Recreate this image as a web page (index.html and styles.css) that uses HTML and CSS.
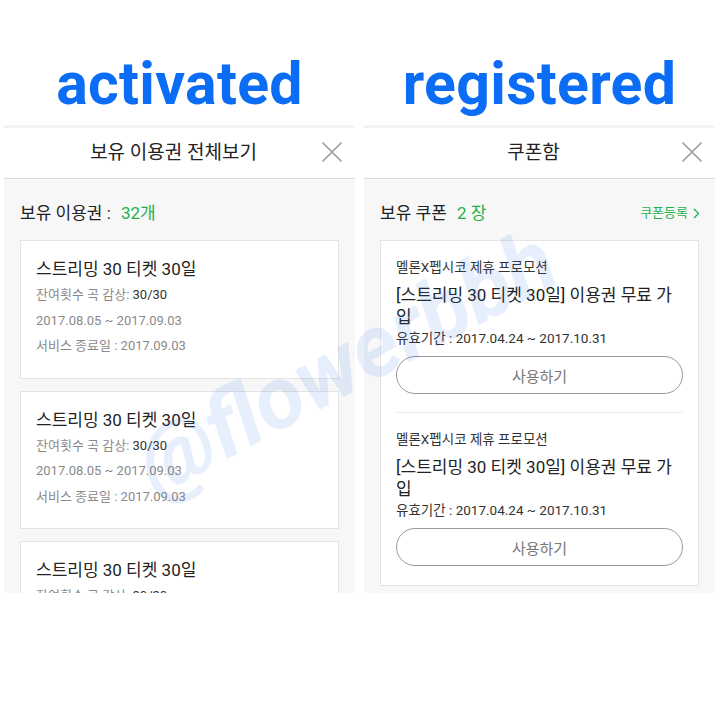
FILE: index.html
```html
<!DOCTYPE html>
<html lang="ko">
<head>
  <meta charset="UTF-8">
  <meta name="viewport" content="width=device-width, initial-scale=1.0">
  <title>activated / registered</title>
  <link rel="stylesheet" href="styles.css">
</head>
<body>
  <div class="board">
    <!-- 이용권 -->
    <section class="col">
      <h1 class="big-title">activated</h1>
      <div class="panel">
        <header class="panel-head">
          <span></span>
          <h2>보유 이용권 전체보기</h2>
          <svg class="close" width="22" height="22" viewBox="0 0 22 22"><path d="M1.5 1.5 L20.5 20.5 M20.5 1.5 L1.5 20.5" stroke="#9a9a9a" stroke-width="1.6" fill="none"/></svg>
        </header>
        <div class="panel-body">
          <div class="summary"><span>보유 이용권 : <em>32개</em></span></div>

          <div class="ticket">
            <h3>스트리밍 30 티켓 30일</h3>
            <p>잔여횟수 곡 감상: <b>30/30</b></p>
            <p>2017.08.05 ~ 2017.09.03</p>
            <p>서비스 종료일 : 2017.09.03</p>
          </div>
          <div class="ticket">
            <h3>스트리밍 30 티켓 30일</h3>
            <p>잔여횟수 곡 감상: <b>30/30</b></p>
            <p>2017.08.05 ~ 2017.09.03</p>
            <p>서비스 종료일 : 2017.09.03</p>
          </div>
          <div class="ticket">
            <h3>스트리밍 30 티켓 30일</h3>
            <p>잔여횟수 곡 감상: <b>30/30</b></p>
            <p>2017.08.05 ~ 2017.09.03</p>
            <p>서비스 종료일 : 2017.09.03</p>
          </div>
        </div>
      </div>
    </section>

    <!-- 쿠폰 -->
    <section class="col">
      <h1 class="big-title">registered</h1>
      <div class="panel">
        <header class="panel-head">
          <span></span>
          <h2>쿠폰함</h2>
          <svg class="close" width="22" height="22" viewBox="0 0 22 22"><path d="M1.5 1.5 L20.5 20.5 M20.5 1.5 L1.5 20.5" stroke="#9a9a9a" stroke-width="1.6" fill="none"/></svg>
        </header>
        <div class="panel-body">
          <div class="summary">
            <span>보유 쿠폰 <em>2 장</em></span>
            <a href="#" class="reg-link">쿠폰등록
              <svg width="7" height="11" viewBox="0 0 7 11"><path d="M1 1 L5.5 5.5 L1 10" stroke="#1fb24a" stroke-width="1.3" fill="none"/></svg>
            </a>
          </div>

          <div class="coupon-box">
            <div class="coupon">
              <p class="promo">멜론X펩시코 제휴 프로모션</p>
              <h3>[스트리밍 30 티켓 30일] 이용권 무료 가입</h3>
              <p class="period">유효기간 : 2017.04.24 ~ 2017.10.31</p>
              <button class="use-btn">사용하기</button>
            </div>
            <div class="coupon">
              <p class="promo">멜론X펩시코 제휴 프로모션</p>
              <h3>[스트리밍 30 티켓 30일] 이용권 무료 가입</h3>
              <p class="period">유효기간 : 2017.04.24 ~ 2017.10.31</p>
              <button class="use-btn">사용하기</button>
            </div>
          </div>
        </div>
      </div>
    </section>

    <div class="watermark">@flowerbbh</div>
  </div>
</body>
</html>
```

FILE: styles.css
```css
:root {
  --blue: #0b6cf6;
  --green: #1fb24a;
  --text-dark: #222;
  --text-gray: #8a8a8a;
  --line: #e4e4e4;
  --panel-bg: #f7f7f7;
}

* {
  margin: 0;
  padding: 0;
  box-sizing: border-box;
}

body {
  background: #fff;
  font-family: Roboto, "Noto Sans CJK KR", sans-serif;
  color: var(--text-dark);
  width: 720px;
  height: 720px;
  overflow: hidden;
}

.board {
  position: relative;
  display: flex;
  gap: 9px;
  padding: 0 5px 0 4px;
}

.col {
  flex: 1;
  display: flex;
  flex-direction: column;
}

/* 큰 제목 */
.big-title {
  margin: 55px 0 12px;
  font-size: 59px;
  line-height: 58px;
  font-weight: 700;
  color: var(--blue);
  text-align: center;
  letter-spacing: 0.3px;
}

/* 패널 */
.panel {
  height: 468px;
  overflow: hidden;
  background: var(--panel-bg);
  border-top: 3px solid #f3f3f3;
}

.panel-head {
  height: 51px;
  background: #fff;
  border-bottom: 1px solid #dcdcdc;
  display: grid;
  grid-template-columns: 1fr auto 1fr;
  align-items: center;
  padding: 0 12px 5px 0;
}

.panel-head h2 {
  font-size: 19px;
  font-weight: 400;
  color: #222;
}

.panel-head .close {
  justify-self: end;
  margin-top: 3px;
}

.panel-body {
  padding: 22px 16px 0;
}

.summary {
  font-size: 17px;
  line-height: 24px;
  color: #222;
  display: flex;
  justify-content: space-between;
  align-items: center;
  margin-bottom: 15px;
}

.summary em {
  font-style: normal;
  color: var(--green);
  margin-left: 6px;
}

.reg-link {
  font-size: 13px;
  color: var(--green);
  text-decoration: none;
  display: flex;
  align-items: center;
  gap: 5px;
  margin-right: -1px;
}

/* 이용권 카드 */
.ticket {
  background: #fff;
  border: 1px solid var(--line);
  padding: 17px 15px 19px;
  margin-bottom: 12px;
}

.ticket h3 {
  font-size: 17px;
  font-weight: 400;
  line-height: 22px;
  margin-bottom: 2px;
}

.ticket p {
  font-size: 13px;
  line-height: 25.5px;
  color: var(--text-gray);
}

.ticket b {
  font-weight: 400;
  color: #333;
}

/* 쿠폰 */
.coupon-box {
  background: #fff;
  border: 1px solid var(--line);
  padding: 0 15px;
}

.coupon {
  padding: 16px 0 18px;
  border-bottom: 1px solid #ebebeb;
}

.coupon:last-child {
  border-bottom: none;
  padding-bottom: 19px;
}

.coupon .promo {
  font-size: 13.5px;
  line-height: 20px;
  color: #333;
  margin-bottom: 7px;
}

.coupon h3 {
  font-size: 17px;
  font-weight: 400;
  line-height: 22px;
  color: #222;
}

.coupon .period {
  font-size: 13.5px;
  line-height: 20px;
  color: #333;
}

.use-btn {
  display: block;
  width: 100%;
  height: 38px;
  margin-top: 8px;
  background: #fff;
  border: 1px solid #9a9a9a;
  border-radius: 19px;
  font-family: Roboto, "Noto Sans CJK KR", sans-serif;
  font-size: 15px;
  color: #777;
}

/* 워터마크 */
.watermark {
  position: absolute;
  left: 115px;
  top: 310px;
  font-size: 88px;
  font-weight: 700;
  font-style: italic;
  color: rgba(40, 110, 235, 0.11);
  transform: rotate(-28deg);
  transform-origin: center;
  pointer-events: none;
  white-space: nowrap;
}
```
